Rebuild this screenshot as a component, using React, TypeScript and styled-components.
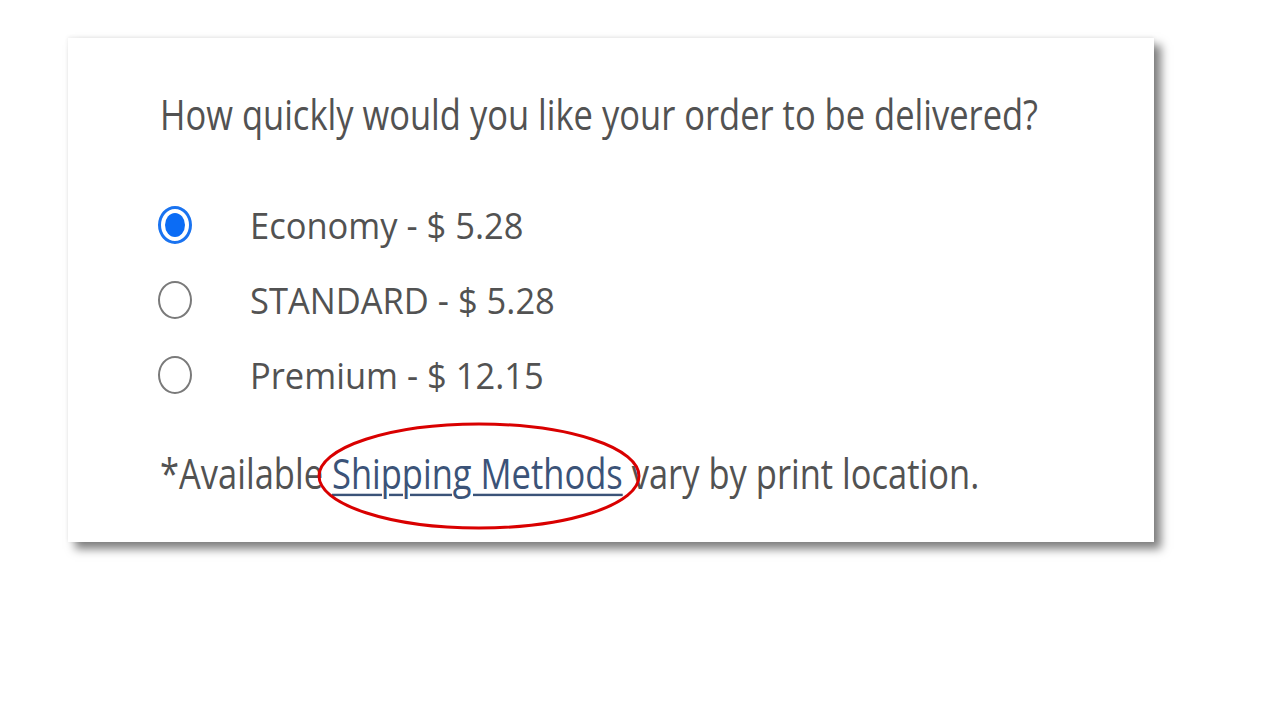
import React from "react";
import styled, { createGlobalStyle } from "styled-components";

const Global = createGlobalStyle`
  html, body { margin: 0; padding: 0; background: #ffffff; }
  body { font-family: "Open Sans", "Liberation Sans", sans-serif; width: 1280px; height: 720px; overflow: hidden; }
`;

const Page = styled.div`
  padding: 38px 0 0 68px;
`;

const Card = styled.div`
  position: relative;
  width: 1086px;
  height: 504px;
  box-sizing: border-box;
  background: #fff;
  box-shadow: 7px 7px 9px rgba(0, 0, 0, 0.5), 0 -1px 4px rgba(0, 0, 0, 0.08);
  padding: 54px 0 0 90px;
  color: #525252;
  display: flex;
  flex-direction: column;
  align-items: flex-start;
`;

/* The reference screenshot is stretched vertically; the text is scaled
   upward from its baseline to match. */
const Heading = styled.div`
  font-size: 34.5px;
  line-height: 50px;
  white-space: nowrap;
  padding-left: 2px;
  transform: scaleY(1.22);
  transform-origin: 0 38.4px;
`;

const Options = styled.div`
  margin-top: 46px;
  display: flex;
  flex-direction: column;
`;

const Row = styled.label`
  display: flex;
  align-items: center;
  height: 75px;
  gap: 58px;
`;

const Radio = styled.span<{ $checked?: boolean }>`
  box-sizing: border-box;
  width: 34px;
  height: 38px;
  border-radius: 50%;
  border: ${(p) => (p.$checked ? "3px solid #1a73f0" : "2.5px solid #7a7a7a")};
  display: flex;
  align-items: center;
  justify-content: center;
  margin-top: -1px;
  &::after {
    content: "";
    display: ${(p) => (p.$checked ? "block" : "none")};
    width: 20px;
    height: 24px;
    border-radius: 50%;
    background: #0b6cf5;
  }
`;

const OptionText = styled.span`
  display: inline-block;
  font-size: 34.5px;
  line-height: 75px;
  white-space: nowrap;
  transform: scaleY(1.08);
  transform-origin: 0 50.9px;
`;

const Footer = styled.div`
  margin-top: 38px;
  font-size: 34.5px;
  line-height: 50px;
  white-space: nowrap;
  padding-left: 2px;
  transform: scaleY(1.2);
  transform-origin: 0 38.4px;
`;

const Link = styled.a`
  color: #3b5378;
  text-decoration: underline;
  text-decoration-thickness: 2px;
  text-underline-offset: 4px;
`;

const Annotation = styled.svg`
  position: absolute;
  left: 247px;
  top: 382px;
  pointer-events: none;
`;

const options = [
  { label: "Economy - $ 5.28", checked: true },
  { label: "STANDARD - $ 5.28", checked: false },
  { label: "Premium - $ 12.15", checked: false },
];

export default function App() {
  return (
    <>
      <Global />
      <Page>
        <Card>
          <Heading>How quickly would you like your order to be delivered?</Heading>
          <Options>
            {options.map((o) => (
              <Row key={o.label}>
                <Radio $checked={o.checked} />
                <OptionText>{o.label}</OptionText>
              </Row>
            ))}
          </Options>
          <Footer>
            *Available <Link>Shipping Methods</Link> vary by print location.
          </Footer>
          <Annotation width="328" height="112" viewBox="0 0 328 112">
            <ellipse cx="164" cy="56" rx="160" ry="52" fill="none" stroke="#d90000" strokeWidth="3" />
          </Annotation>
        </Card>
      </Page>
    </>
  );
}
